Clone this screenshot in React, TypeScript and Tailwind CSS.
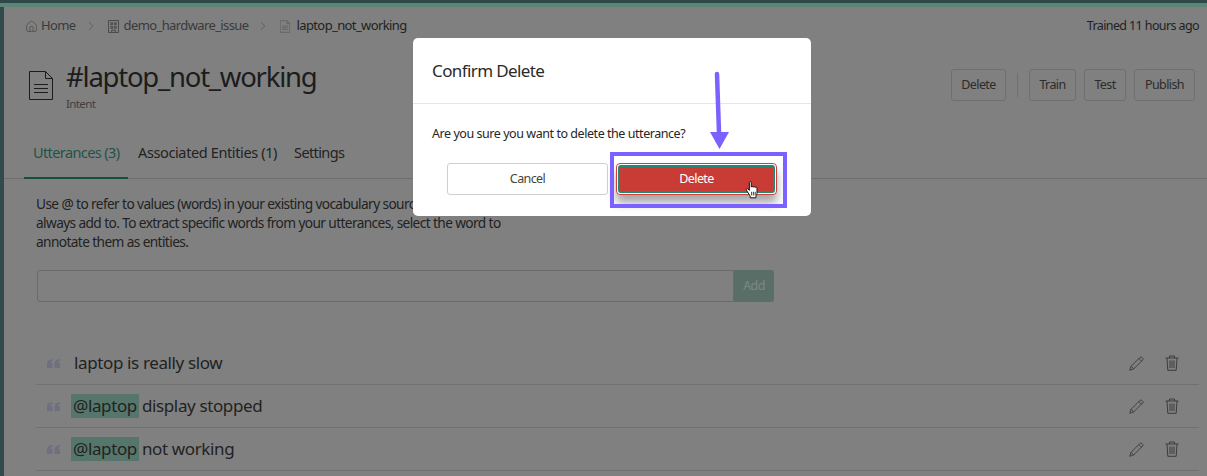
import React from 'react';
import { ChevronRight, Home } from 'lucide-react';

const FileIcon = ({ className }: { className?: string }) => (
  <svg viewBox="0 0 24 29" fill="none" stroke="currentColor" strokeWidth="1" className={className}>
    <path d="M.5.5h16l7 7v21H.5z" />
    <path d="M16.5.5v7h7" />
    <path d="M5 13.5h14M5 17.5h14M5 21.5h14" />
  </svg>
);

const BuildingIcon = () => (
  <svg viewBox="0 0 12 14" fill="none" stroke="currentColor" strokeWidth="1" className="w-[11px] h-[13px]">
    <path d="M.5.5h11v13H.5zM3 3h2v2H3zM7 3h2v2H7zM3 7h2v2H3zM7 7h2v2H7zM4 13.5V11h4v2.500" />
  </svg>
);

const TrashIcon = () => (
  <svg viewBox="0 0 14 16" fill="none" stroke="currentColor" strokeWidth="1" className="w-[14px] h-4">
    <path d="M.5 3h13M4.500 3V1h5v2M2 3l.8 12.300h8.400L12 3M5 5.500v7.500M7 5.500v7.500M9 5.500v7.500" />
  </svg>
);

const PencilIcon = () => (
  <svg viewBox="0 0 16 16" fill="none" stroke="currentColor" strokeWidth="1" className="w-[15px] h-[15px]">
    <path d="M.8 15.200l1.400-4.200L11.800 1.400c.5-.5 1.200-.5 1.700 0l1.100 1.100c.5.5.5 1.200 0 1.700L5 13.800z" />
    <path d="M2.200 11 5 13.800M10.500 2.700l2.800 2.800" />
  </svg>
);

const QuoteIcon = () => (
  <svg viewBox="0 0 13 9" fill="currentColor" className="w-[13px] h-[9px] text-[#6f6f82] mr-[11px]">
    <path d="M0 4.500C0 1.800 2 .3 5.500 0v2C4 2.300 3.300 3 3.300 3.800h2.200V9H0z" />
    <path d="M7.500 4.500C7.500 1.800 9.500.3 13 0v2c-1.500.3-2.200 1-2.200 1.800H13V9H7.500z" />
  </svg>
);

const HandCursor = () => (
  <svg viewBox="0 0 16 20" className="w-[15px] h-[18px]">
    <path
      d="M4.500 1.600c0-1.300 2.100-1.300 2.100 0v5.200c.2-1 2-1 2.200.1.300-.9 2-.8 2.200.3.400-.7 2-.5 2 .7v4.600c0 2-.5 3-1.200 4.300v1.900H5.500v-1.700L1.300 10.300c-.8-1.200.7-2.300 1.700-1.400l1.500 1.500z"
      fill="#fff"
      stroke="#111"
      strokeWidth="1.100"
      strokeLinejoin="round"
    />
    <path d="M7 12v4M9 12v4M11 12v4" stroke="#111" strokeWidth=".9" />
  </svg>
);

function TopButton({ label, w }: { label: string; w: string }) {
  return (
    <button className={`${w} h-8 border border-[#6f6f6f] rounded-[3px] text-[12.5px] text-[#2c2c2c]`}>{label}</button>
  );
}

function UtteranceRow({ tag, text }: { tag?: string; text: string }) {
  return (
    <div className="flex items-center h-[43px] border-b border-[#717171] pl-[11px] pr-[20px] text-[17px] tracking-[-0.022em] text-[#222]">
      <QuoteIcon />
      {tag && <span className="bg-[#56766b] px-[2px] h-6 leading-6 mr-[3px]">{tag}</span>}
      <span className={tag ? '' : 'ml-[3px]'}>{text}</span>
      <div className="ml-auto flex items-center gap-[21px] text-[#3c3c3c]">
        <PencilIcon />
        <TrashIcon />
      </div>
    </div>
  );
}

export default function App() {
  return (
    <div className="relative w-[1207px] h-[476px] overflow-hidden bg-[#808080] font-['Noto_Sans',sans-serif] tracking-[-0.038em]">
      <div className="h-[3px] bg-[#2e4849]" />
      <div className="h-1 bg-[#5b8575]" />
      <div className="flex h-[469px]">
        <div className="w-1 bg-[#324a4b]" />
        <div className="flex-1 min-w-0">
          {/* Breadcrumb */}
          <div className="flex items-center h-[38px] pl-[21px] pr-[8px] text-[13px] text-[#3a3a3a]">
            <Home className="w-[13px] h-[13px] mr-[3px] text-[#454545]" strokeWidth={1.2} />
            <span>Home</span>
            <ChevronRight className="w-[14px] h-[14px] ml-[8px] mr-[10px] text-[#505050]" strokeWidth={1.2} />
            <span className="text-[#454545] mr-[5px]"><BuildingIcon /></span>
            <span>demo_hardware_issue</span>
            <ChevronRight className="w-[14px] h-[14px] ml-[8px] mr-[10px] text-[#505050]" strokeWidth={1.2} />
            <FileIcon className="w-[10px] h-[13px] text-[#454545] mr-[6px]" />
            <span className="text-[#222]">laptop_not_working</span>
            <span className="ml-auto text-[12.5px] text-[#222]">Trained 11 hours ago</span>
          </div>

          {/* Title */}
          <div className="flex items-start h-[94px] pl-[25px] pr-[12px] pt-[14px]">
            <FileIcon className="w-6 h-[29px] mt-[12px] text-[#1c1c1c]" />
            <div className="ml-[13px]">
              <h1 className="text-[27.5px] leading-[36px] tracking-[-0.045em] text-[#1c1c1c]">#laptop_not_working</h1>
              <p className="text-[11.5px] leading-4 mt-px text-[#3f3f3f]">Intent</p>
            </div>
            <div className="ml-auto flex items-center mt-[10px]">
              <TopButton label="Delete" w="w-[55px]" />
              <div className="w-px h-6 bg-[#6f6f6f] mx-[11px]" />
              <TopButton label="Train" w="w-[47px] mr-2" />
              <TopButton label="Test" w="w-[42px] mr-2" />
              <TopButton label="Publish" w="w-[61px]" />
            </div>
          </div>

          {/* Tabs */}
          <div className="flex h-[40px] pl-[20px] border-b border-[#6d6d6d] text-[14.5px] text-[#222] items-stretch">
            <div className="relative w-[104px] pt-[3px] pl-[9px] text-[#1d5448]">
              Utterances (3)
              <div className="absolute left-0 right-0 bottom-[-1px] h-[2px] bg-[#14503f]" />
            </div>
            <div className="pt-[3px] ml-[10px] tracking-[-0.026em]">Associated Entities (1)</div>
            <div className="pt-[3px] ml-[17px]">Settings</div>
          </div>

          {/* Utterances */}
          <div className="pl-[32px] pr-[8px]">
            <p className="w-[500px] mt-[15px] text-[13.7px] leading-[19px] text-[#222]">
              Use @ to refer to values (words) in your existing vocabulary source that you can<br />
              always add to. To extract specific words from your utterances, select the word to<br />
              annotate them as entities.
            </p>
            <div className="flex w-[737px] ml-px h-[32px] mt-[19px]">
              <div className="flex-1 border border-[#6a6a6a] rounded-l-[3px]" />
              <div className="w-[40px] bg-[#5a6e68] rounded-r-[3px] flex items-center justify-center text-[12.5px] text-[#7c8884]">Add</div>
            </div>
            <div className="mt-[40px]">
              <UtteranceRow text="laptop is really slow" />
              <UtteranceRow tag="@laptop" text="display stopped" />
              <UtteranceRow tag="@laptop" text="not working" />
            </div>
          </div>
        </div>
      </div>

      {/* Confirm dialog */}
      <div className="absolute left-[413px] top-[38px] w-[398px] h-[178px] bg-white rounded-[5px]">
        <div className="h-[66px] pl-[19px] pt-[20px] border-b border-[#e6e6e6] text-[17px] leading-[26px] text-[#2a2a2a]">Confirm Delete</div>
        <p className="pl-[19px] mt-[20px] text-[12.5px] leading-[19px] tracking-[-0.036em] text-[#262626]">Are you sure you want to delete the utterance?</p>
        <div className="flex pl-[34px] mt-[20px]">
          <button className="w-[161px] h-[32px] border border-[#cfcfcf] rounded-[3px] text-[12.5px] text-[#444]">Cancel</button>
          <div className="ml-[8px] w-[161px] h-[32px] p-px bg-white border border-[#d0403a] rounded-[4px] shadow-[0_8px_10px_rgba(0,0,0,0.35)]">
            <button className="w-full h-full bg-[#c83c35] rounded-[3px] border-2 border-[#1f8a76] text-[12.5px] text-white">Delete</button>
          </div>
        </div>
      </div>

      {/* Annotation box */}
      <div className="absolute left-[610px] top-[152px] w-[177px] h-[56px] border-[4px] border-[#7b61ff]" />
      <svg viewBox="0 0 24 80" className="absolute left-[707px] top-[71px] w-6 h-20">
        <path d="M10 3 L12 62" stroke="#7b61ff" strokeWidth="4.500" strokeLinecap="round" fill="none" />
        <path d="M3 61h19l-9.500 17z" fill="#7b61ff" />
      </svg>
      <div className="absolute left-[745px] top-[181px]">
        <HandCursor />
      </div>
    </div>
  );
}
